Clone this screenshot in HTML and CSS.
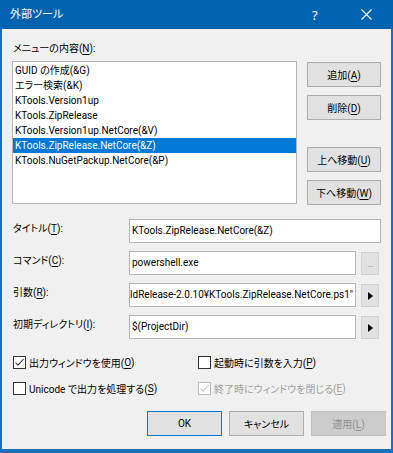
FILE: index.html
```html
<!DOCTYPE html>
<html lang="ja">
<head>
    <meta charset="UTF-8">
    <meta name="viewport" content="width=device-width, initial-scale=1.0">
    <title>外部ツール</title>
    <link rel="stylesheet" href="styles.css">
</head>
<body>
    <div class="window">
        <div class="titlebar">
            <span class="title">外部ツール</span>
            <span class="help">?</span>
            <span class="close">
                <svg width="11" height="11" viewBox="0 0 11 11">
                    <path d="M0.5 0.5 L10.5 10.5 M10.5 0.5 L0.5 10.5" stroke="#fff" stroke-width="1.1" fill="none"/>
                </svg>
            </span>
        </div>

        <div class="dialog-body">
            <div class="list-label">メニューの内容(<u>N</u>):</div>
            <div class="list-row">
                <ul class="listbox">
                    <li>GUID の作成(&amp;G)</li>
                    <li>エラー検索(&amp;K)</li>
                    <li>KTools.Version1up</li>
                    <li>KTools.ZipRelease</li>
                    <li>KTools.Version1up.NetCore(&amp;V)</li>
                    <li class="selected">KTools.ZipRelease.NetCore(&amp;Z)</li>
                    <li>KTools.NuGetPackup.NetCore(&amp;P)</li>
                </ul>
                <div class="side-buttons">
                    <button class="btn">追加(<u>A</u>)</button>
                    <button class="btn">削除(<u>D</u>)</button>
                    <button class="btn move-up">上へ移動(<u>U</u>)</button>
                    <button class="btn">下へ移動(<u>W</u>)</button>
                </div>
            </div>

            <div class="fields">
                <div class="field">
                    <label>タイトル(<u>T</u>):</label>
                    <div class="textbox wide"><span>KTools.ZipRelease.NetCore(&amp;Z)</span></div>
                </div>
                <div class="field">
                    <label>コマンド(<u>C</u>):</label>
                    <div class="textbox"><span>powershell.exe</span></div>
                    <button class="mini-btn dots">...</button>
                </div>
                <div class="field">
                    <label>引数(<u>R</u>):</label>
                    <div class="textbox scrolled"><span>-File "$(SolutionDir)¥tools¥BuildRelease-2.0.10¥KTools.ZipRelease.NetCore.ps1"</span></div>
                    <button class="mini-btn"><span class="arrow"></span></button>
                </div>
                <div class="field">
                    <label>初期ディレクトリ(<u>I</u>):</label>
                    <div class="textbox"><span>$(ProjectDir)</span></div>
                    <button class="mini-btn"><span class="arrow"></span></button>
                </div>
            </div>

            <div class="checks">
                <div class="check">
                    <span class="box checked">
                        <svg width="11" height="11" viewBox="0 0 11 11"><path d="M1.5 5.5 L4 8.2 L9.6 2" stroke="#333" stroke-width="1.1" fill="none"/></svg>
                    </span>
                    出力ウィンドウを使用(<u>O</u>)
                </div>
                <div class="check">
                    <span class="box"></span>
                    起動時に引数を入力(<u>P</u>)
                </div>
                <div class="check">
                    <span class="box"></span>
                    Unicode で出力を処理する(<u>S</u>)
                </div>
                <div class="check disabled">
                    <span class="box checked">
                        <svg width="11" height="11" viewBox="0 0 11 11"><path d="M1.5 5.5 L4 8.2 L9.6 2" stroke="#c4c4c4" stroke-width="1.1" fill="none"/></svg>
                    </span>
                    終了時にウィンドウを閉じる(<u>E</u>)
                </div>
            </div>

            <div class="actions">
                <button class="btn default">OK</button>
                <button class="btn">キャンセル</button>
                <button class="btn" disabled>適用(<u>L</u>)</button>
            </div>
        </div>
    </div>
</body>
</html>
```

FILE: styles.css
```css
body {
    margin: 0;
    font-family: Roboto, "Noto Sans CJK JP", sans-serif;
    font-size: 10px;
    font-feature-settings: "palt";
    color: #000;
}
.window {
    width: 393px;
    height: 453px;
    box-sizing: border-box;
    background-color: #f0f0f0;
    border: 2px solid #1a6fb8;
    border-top: none;
    border-bottom-width: 4px;
    display: flex;
    flex-direction: column;
}
.titlebar {
    height: 29px;
    background-color: #0063b1;
    color: white;
    display: flex;
    align-items: center;
    margin: 0 -2px;
    padding: 0 0 0 10px;
}
.title {
    font-size: 11px;
    flex: 1;
    line-height: 29px;
}
.help {
    width: 14px;
    font-size: 13px;
    margin-right: 35px;
    font-family: "Noto Sans", sans-serif;
}
.close {
    display: flex;
    margin-right: 21px;
}
.dialog-body {
    padding: 12px 10px 0 10px;
}
u {
    text-decoration: underline;
    text-underline-offset: 2px;
}
.list-label {
    line-height: 16px;
    margin-bottom: 4px;
    padding-left: 1px;
}
.list-row {
    display: flex;
    align-items: flex-start;
}
.listbox {
    list-style: none;
    margin: 0;
    padding: 1px 0 0 0;
    width: 285px;
    height: 143px;
    box-sizing: border-box;
    background-color: white;
    border: 1px solid #b4b4b4;
}
.listbox li {
    height: 15px;
    line-height: 15px;
    padding-left: 2px;
    white-space: nowrap;
}
.listbox li.selected {
    background-color: #0078d7;
    color: white;
}
.side-buttons {
    margin-left: auto;
    padding-top: 1px;
    display: flex;
    flex-direction: column;
    gap: 8px;
}
.side-buttons .move-up {
    margin-top: 19px;
}
.btn {
    width: 74px;
    height: 25px;
    padding: 0;
    background-color: #e1e1e1;
    border: 1px solid #adadad;
    font-family: inherit;
    font-size: 10px;
    font-feature-settings: "palt";
    color: #000;
}
.btn.default {
    border-color: #0078d7;
}
.btn:disabled {
    background-color: #cccccc;
    border-color: #bfbfbf;
    color: #8f8f8f;
}
.fields {
    margin-top: 14px;
    display: flex;
    flex-direction: column;
    gap: 8px;
}
.field {
    display: flex;
    align-items: flex-start;
    height: 24px;
}
.field label {
    width: 117px;
    flex-shrink: 0;
    line-height: 19px;
    padding-left: 1px;
    box-sizing: border-box;
}
.textbox {
    width: 227px;
    height: 24px;
    box-sizing: border-box;
    background-color: white;
    border: 1px solid #b4b4b4;
    padding: 0 2px;
    display: flex;
    align-items: center;
    overflow: hidden;
    white-space: nowrap;
}
.textbox span {
    flex-shrink: 0;
    line-height: 22px;
}
.textbox.wide {
    width: 253px;
}
.textbox.scrolled {
    justify-content: flex-end;
}
.mini-btn {
    width: 18px;
    height: 23px;
    margin: 1px 0 0 5px;
    padding: 0;
    background-color: #e1e1e1;
    border: 1px solid #d0d0d0;
    display: flex;
    align-items: center;
    justify-content: center;
}
.mini-btn.dots {
    color: #9a9a9a;
    font-size: 9px;
    align-items: flex-end;
    padding-bottom: 5px;
    letter-spacing: -0.5px;
}
.arrow {
    width: 0;
    height: 0;
    border-top: 4px solid transparent;
    border-bottom: 4px solid transparent;
    border-left: 5px solid #000;
    margin-left: 1px;
}
.checks {
    margin-top: 17px;
    display: grid;
    grid-template-columns: 185px 1fr;
    row-gap: 13px;
}
.check {
    display: flex;
    align-items: center;
    height: 13px;
    padding-left: 1px;
    white-space: nowrap;
}
.box {
    width: 13px;
    height: 13px;
    box-sizing: border-box;
    border: 1px solid #333;
    background-color: white;
    margin-right: 3px;
    display: flex;
    flex-shrink: 0;
}
.check.disabled {
    color: #a0a0a0;
}
.check.disabled .box {
    border-color: #bcbcbc;
}
.actions {
    margin-top: 16px;
    margin-right: -5px;
    display: flex;
    justify-content: flex-end;
    gap: 7px;
}
.actions .btn {
    width: 75px;
}
```
